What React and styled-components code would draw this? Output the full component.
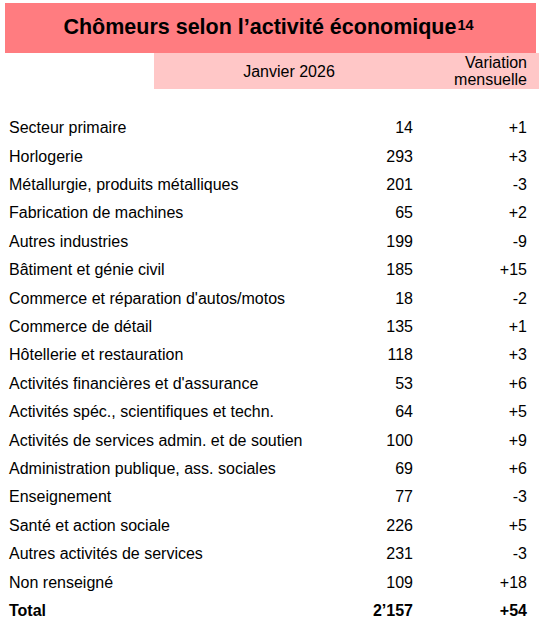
import React from "react";
import styled, { createGlobalStyle } from "styled-components";

const GlobalStyle = createGlobalStyle`
  html, body {
    margin: 0;
    padding: 0;
    background: #ffffff;
  }
  body {
    font-family: "Liberation Sans", Arial, sans-serif;
    color: #000000;
  }
`;

const Page = styled.div`
  width: 541px;
  height: 631px;
  padding-top: 3px;
  box-sizing: border-box;
  overflow: hidden;
`;

const TitleBar = styled.h1`
  margin: 0 5px;
  height: 50px;
  background: #ff7c80;
  display: flex;
  align-items: center;
  justify-content: center;
  font-size: 21.5px;
  font-weight: bold;
  padding-bottom: 1px;
  padding-right: 4px;
  box-sizing: border-box;

  sup {
    font-size: 14.5px;
    font-weight: bold;
    position: relative;
    top: -3px;
    margin-left: 1px;
  }
`;

const HeaderBand = styled.div`
  margin-left: 154px;
  width: 385px;
  height: 36px;
  background: #ffc7c7;
  display: grid;
  grid-template-columns: 270px 1fr;
  font-size: 16px;
`;

const HeadCell = styled.div`
  display: flex;
  align-items: center;
  justify-content: ${(p) => (p.$right ? "flex-end" : "center")};
  text-align: ${(p) => (p.$right ? "right" : "center")};
  padding-right: ${(p) => (p.$right ? "12px" : "0")};
  line-height: 17px;
`;

const Table = styled.div`
  margin-top: 25px;
  padding: 0 14px 0 9px;
`;

const Row = styled.div`
  display: grid;
  grid-template-columns: 1fr 80px 114px;
  height: 28.42px;
  align-items: center;
  font-size: 16px;
  font-weight: ${(p) => (p.$bold ? "bold" : "normal")};
`;

const Num = styled.div`
  text-align: right;
`;

const rows = [
  ["Secteur primaire", "14", "+1"],
  ["Horlogerie", "293", "+3"],
  ["Métallurgie, produits métalliques", "201", "-3"],
  ["Fabrication de machines", "65", "+2"],
  ["Autres industries", "199", "-9"],
  ["Bâtiment et génie civil", "185", "+15"],
  ["Commerce et réparation d'autos/motos", "18", "-2"],
  ["Commerce de détail", "135", "+1"],
  ["Hôtellerie et restauration", "118", "+3"],
  ["Activités financières et d'assurance", "53", "+6"],
  ["Activités spéc., scientifiques et techn.", "64", "+5"],
  ["Activités de services admin. et de soutien", "100", "+9"],
  ["Administration publique, ass. sociales", "69", "+6"],
  ["Enseignement", "77", "-3"],
  ["Santé et action sociale", "226", "+5"],
  ["Autres activités de services", "231", "-3"],
  ["Non renseigné", "109", "+18"],
];

export default function App() {
  return (
    <Page>
      <GlobalStyle />
      <TitleBar>
        Chômeurs selon l’activité économique<sup>14</sup>
      </TitleBar>
      <HeaderBand>
        <HeadCell>Janvier 2026</HeadCell>
        <HeadCell $right>
          Variation
          <br />
          mensuelle
        </HeadCell>
      </HeaderBand>
      <Table>
        {rows.map(([label, count, change]) => (
          <Row key={label}>
            <div>{label}</div>
            <Num>{count}</Num>
            <Num>{change}</Num>
          </Row>
        ))}
        <Row $bold>
          <div>Total</div>
          <Num>2’157</Num>
          <Num>+54</Num>
        </Row>
      </Table>
    </Page>
  );
}
